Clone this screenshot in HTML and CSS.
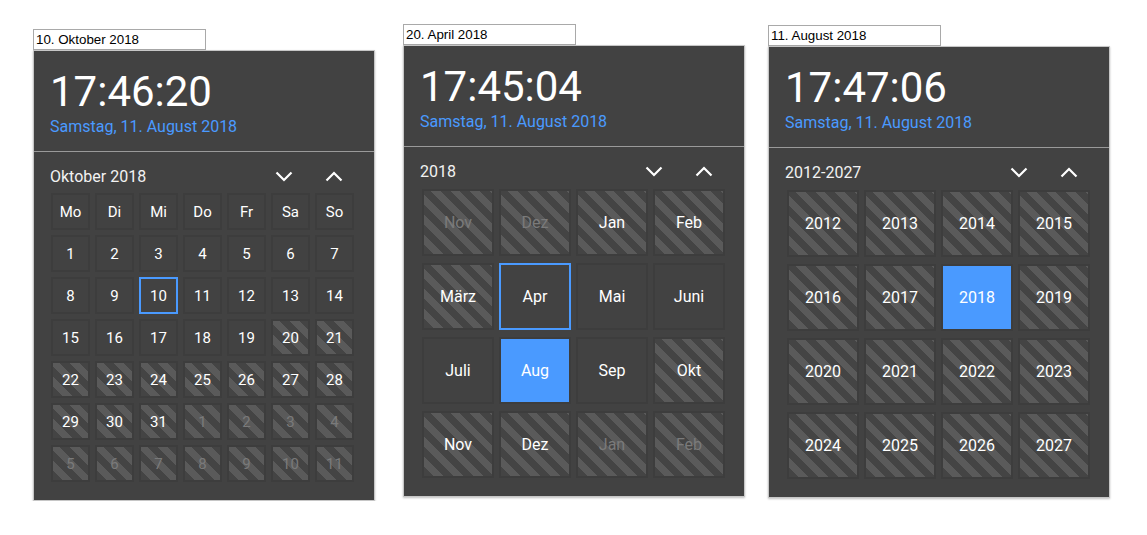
FILE: index.html
```html
<!DOCTYPE html>
<html lang="de">
<head>
<meta charset="utf-8">
<title>Datepicker</title>
<link rel="stylesheet" href="styles.css">
</head>
<body>
<div class="row">

  <div class="picker picker-days">
    <input class="field" type="text" value="10. Oktober 2018">
    <div class="panel">
      <div class="clock">
        <div class="time">17:46:20</div>
        <div class="date">Samstag, 11. August 2018</div>
      </div>
      <div class="nav">
        <span class="title">Oktober 2018</span>
        <button class="arrow" type="button"><svg width="18" height="11" viewBox="0 0 18 11"><polyline points="1.5,1.5 9,9 16.5,1.5"/></svg></button>
        <button class="arrow" type="button"><svg width="18" height="11" viewBox="0 0 18 11"><polyline points="1.5,9.5 9,2 16.5,9.5"/></svg></button>
      </div>
      <div class="grid days">
        <div class="cell">Mo</div><div class="cell">Di</div><div class="cell">Mi</div><div class="cell">Do</div><div class="cell">Fr</div><div class="cell">Sa</div><div class="cell">So</div>
        <div class="cell">1</div><div class="cell">2</div><div class="cell">3</div><div class="cell">4</div><div class="cell">5</div><div class="cell">6</div><div class="cell">7</div>
        <div class="cell">8</div><div class="cell">9</div><div class="cell selected">10</div><div class="cell">11</div><div class="cell">12</div><div class="cell">13</div><div class="cell">14</div>
        <div class="cell">15</div><div class="cell">16</div><div class="cell">17</div><div class="cell">18</div><div class="cell">19</div><div class="cell striped">20</div><div class="cell striped">21</div>
        <div class="cell striped">22</div><div class="cell striped">23</div><div class="cell striped">24</div><div class="cell striped">25</div><div class="cell striped">26</div><div class="cell striped">27</div><div class="cell striped">28</div>
        <div class="cell striped">29</div><div class="cell striped">30</div><div class="cell striped">31</div><div class="cell striped muted">1</div><div class="cell striped muted">2</div><div class="cell striped muted">3</div><div class="cell striped muted">4</div>
        <div class="cell striped muted">5</div><div class="cell striped muted">6</div><div class="cell striped muted">7</div><div class="cell striped muted">8</div><div class="cell striped muted">9</div><div class="cell striped muted">10</div><div class="cell striped muted">11</div>
      </div>
    </div>
  </div>

  <div class="picker picker-months">
    <input class="field" type="text" value="20. April 2018">
    <div class="panel">
      <div class="clock">
        <div class="time">17:45:04</div>
        <div class="date">Samstag, 11. August 2018</div>
      </div>
      <div class="nav">
        <span class="title">2018</span>
        <button class="arrow" type="button"><svg width="18" height="11" viewBox="0 0 18 11"><polyline points="1.5,1.5 9,9 16.5,1.5"/></svg></button>
        <button class="arrow" type="button"><svg width="18" height="11" viewBox="0 0 18 11"><polyline points="1.5,9.5 9,2 16.5,9.5"/></svg></button>
      </div>
      <div class="grid large">
        <div class="cell striped muted">Nov</div><div class="cell striped muted">Dez</div><div class="cell striped">Jan</div><div class="cell striped">Feb</div>
        <div class="cell striped">März</div><div class="cell selected">Apr</div><div class="cell">Mai</div><div class="cell">Juni</div>
        <div class="cell">Juli</div><div class="cell current">Aug</div><div class="cell">Sep</div><div class="cell striped">Okt</div>
        <div class="cell striped">Nov</div><div class="cell striped">Dez</div><div class="cell striped muted">Jan</div><div class="cell striped muted">Feb</div>
      </div>
    </div>
  </div>

  <div class="picker picker-years">
    <input class="field" type="text" value="11. August 2018">
    <div class="panel">
      <div class="clock">
        <div class="time">17:47:06</div>
        <div class="date">Samstag, 11. August 2018</div>
      </div>
      <div class="nav">
        <span class="title">2012-2027</span>
        <button class="arrow" type="button"><svg width="18" height="11" viewBox="0 0 18 11"><polyline points="1.5,1.5 9,9 16.5,1.5"/></svg></button>
        <button class="arrow" type="button"><svg width="18" height="11" viewBox="0 0 18 11"><polyline points="1.5,9.5 9,2 16.5,9.5"/></svg></button>
      </div>
      <div class="grid large">
        <div class="cell striped">2012</div><div class="cell striped">2013</div><div class="cell striped">2014</div><div class="cell striped">2015</div>
        <div class="cell striped">2016</div><div class="cell striped">2017</div><div class="cell current">2018</div><div class="cell striped">2019</div>
        <div class="cell striped">2020</div><div class="cell striped">2021</div><div class="cell striped">2022</div><div class="cell striped">2023</div>
        <div class="cell striped">2024</div><div class="cell striped">2025</div><div class="cell striped">2026</div><div class="cell striped">2027</div>
      </div>
    </div>
  </div>

</div>
</body>
</html>
```

FILE: styles.css
```css
* {
  box-sizing: border-box;
}

html, body {
  margin: 0;
  padding: 0;
  background: #ffffff;
}

body {
  font-family: Roboto, "Noto Sans", Arial, sans-serif;
}

.row {
  display: flex;
  align-items: flex-start;
}

.picker {
  display: flex;
  flex-direction: column;
  width: 342px;
}

.picker-days {
  margin-left: 33px;
  margin-top: 29px;
}

.picker-months {
  margin-left: 28px;
  margin-top: 24px;
}

.picker-years {
  margin-left: 23px;
  margin-top: 25px;
}

.field {
  display: block;
  width: 173px;
  height: 21px;
  margin: 0;
  padding: 0 2px;
  border: 1px solid #a9a9a9;
  background: #fff;
  font-family: "Liberation Sans", Arial, sans-serif;
  font-size: 13.33px;
  color: #000;
  outline: none;
}

.panel {
  width: 342px;
  background: #424242;
  border: 1px solid #c6c6c6;
  box-shadow: 0 1px 2px rgba(0, 0, 0, 0.25);
  padding-bottom: 18px;
}

.clock {
  padding: 16px 16px 15px;
  border-bottom: 1px solid #9a9a9a;
}

.time {
  font-size: 42px;
  line-height: 49px;
  color: #ffffff;
}

.date {
  margin-top: 1px;
  font-size: 16px;
  line-height: 19px;
  color: #4a9aff;
}

.nav {
  display: flex;
  align-items: center;
  height: 19px;
  margin-top: 15px;
  padding: 0 15px 0 16px;
}

.title {
  flex: 1;
  font-size: 16px;
  line-height: 19px;
  color: #f2f2f2;
}

.arrow {
  display: flex;
  align-items: center;
  justify-content: center;
  width: 50px;
  height: 19px;
  padding: 0;
  border: 0;
  background: none;
}

.arrow polyline {
  fill: none;
  stroke: #ffffff;
  stroke-width: 2.2;
}

.grid {
  display: grid;
  margin-left: 17px;
  width: 303px;
}

.days {
  margin-top: 7px;
  grid-template-columns: repeat(7, 39px);
  grid-auto-rows: 37px;
  gap: 5px;
}

.large {
  margin-top: 8px;
  margin-left: 18px;
  grid-template-columns: repeat(4, 72px);
  grid-auto-rows: 67px;
  gap: 7px 5px;
}

.cell {
  display: flex;
  align-items: center;
  justify-content: center;
  border: 2px solid #3d3d3d;
  color: #ffffff;
  font-size: 16px;
}

.days .cell {
  font-size: 15px;
}

.striped {
  background: repeating-linear-gradient(45deg, #444444 0 7px, #5a5a5a 7px 14px);
}

.muted {
  color: #7a7a7a;
}

.selected {
  border-color: #4a9aff;
}

.current {
  background: #4a9aff;
}
```
